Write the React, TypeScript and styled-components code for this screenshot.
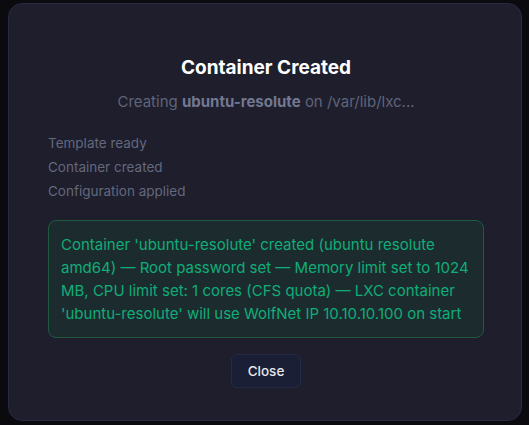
import styled, { createGlobalStyle } from "styled-components";

const GlobalStyle = createGlobalStyle`
  html, body {
    margin: 0;
    padding: 0;
    background: #0a0a0f;
    font-family: Inter, "Noto Sans", sans-serif;
  }
  * {
    box-sizing: border-box;
  }
`;

const steps = ["Template ready", "Container created", "Configuration applied"];

const App = () => {
  return (
    <>
      <GlobalStyle />
      <Page>
        <Modal>
          <Title>Container Created</Title>
          <Subtitle>
            Creating <strong>ubuntu-resolute</strong> on /var/lib/lxc...
          </Subtitle>
          <StepList>
            {steps.map((step) => (
              <Step key={step}>{step}</Step>
            ))}
          </StepList>
          <ResultBox>
            Container 'ubuntu-resolute' created (ubuntu resolute amd64) — Root
            password set — Memory limit set to 1024 MB, CPU limit set: 1 cores
            (CFS quota) — LXC container 'ubuntu-resolute' will use WolfNet IP
            10.10.10.100 on start
          </ResultBox>
          <Actions>
            <CloseButton>Close</CloseButton>
          </Actions>
        </Modal>
      </Page>
    </>
  );
};

export default App;

const Page = styled.div`
  width: 529px;
  height: 425px;
  padding: 3px 7px 4px 8px;
`;

const Modal = styled.div`
  height: 100%;
  background-color: #1e1e2d;
  border: 1px solid #262a42;
  border-radius: 14px;
  padding: 50px 37px 0 39px;
  display: flex;
  flex-direction: column;
`;

const Title = styled.h2`
  margin: 0;
  text-align: center;
  color: #ffffff;
  font-size: 19px;
  font-weight: 700;
  line-height: 28px;
`;

const Subtitle = styled.p`
  margin: 10px 0 0;
  text-align: center;
  color: #5f6479;
  font-size: 15px;
  line-height: 20px;

  strong {
    color: #727891;
    font-weight: 700;
  }
`;

const StepList = styled.div`
  margin-top: 19px;
  display: flex;
  flex-direction: column;
`;

const Step = styled.div`
  color: #63687d;
  font-size: 13.5px;
  line-height: 24px;
`;

const ResultBox = styled.div`
  margin-top: 17px;
  padding: 12px;
  background-color: #1c2c2e;
  border: 1px solid #1f5a3f;
  border-radius: 8px;
  color: #10ad79;
  font-size: 15px;
  line-height: 23px;
`;

const Actions = styled.div`
  margin-top: 16px;
  display: flex;
  justify-content: center;
`;

const CloseButton = styled.button`
  height: 34px;
  padding: 0 16px;
  background-color: #1a1f35;
  border: 1px solid #252b47;
  border-radius: 6px;
  color: #e5e7eb;
  font-family: Inter, sans-serif;
  font-size: 13.5px;
  font-weight: 500;
  cursor: pointer;
`;
